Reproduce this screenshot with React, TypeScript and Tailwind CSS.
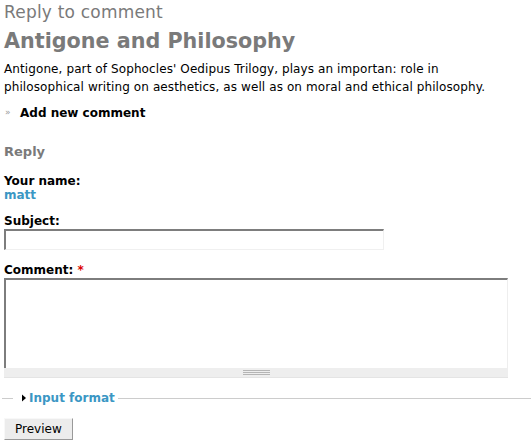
import React from "react";

export default function App() {
  return (
    <div
      className="w-[531px] h-[443px] bg-white overflow-hidden text-[12px] text-black"
      style={{ fontFamily: '"DejaVu Sans", Verdana, sans-serif' }}
    >
      <div className="px-[4px]">
        <div className="text-[17px] tracking-[0.2px] leading-[20px] text-[#7a7a7a] pt-[2px]">Reply to comment</div>
        <h2 className="text-[20.7px] leading-[26px] font-bold text-[#7a7a7a] mt-[6px]">Antigone and Philosophy</h2>
        <p className="w-[505px] text-[12px] tracking-[0.1px] leading-[18px] mt-[6px]">
          Antigone, part of Sophocles' Oedipus Trilogy, plays an importan: role in philosophical writing on aesthetics, as well as on moral and ethical philosophy.
        </p>
        <div className="flex items-center mt-[9px] h-[16px]">
          <span className="text-[9px] text-[#999] w-[16px] pl-[1px]">»</span>
          <span className="font-bold text-[12px]">Add new comment</span>
        </div>
        <div className="text-[13px] font-bold text-[#7a7a7a] mt-[23px] leading-[16px]">Reply</div>
        <div className="mt-[14px]">
          <div className="font-bold leading-[14px]">Your name:</div>
          <div className="font-bold text-[#3b97c4] leading-[15px]">matt</div>
        </div>
        <div className="mt-[11px]">
          <div className="font-bold leading-[15px]">Subject:</div>
          <div className="w-[380px] h-[21px] border-t-[2px] border-l-[2px] border-r border-b border-t-[#7d7d7d] border-l-[#7d7d7d] border-r-[#f0f0f0] border-b-[#f0f0f0] bg-white" />
        </div>
        <div className="mt-[13px]">
          <div className="font-bold leading-[15px]">
            Comment: <span className="text-[#d00]">*</span>
          </div>
          <div className="w-[504px]">
            <div className="h-[90px] border-t-[2px] border-l-[2px] border-r border-t-[#7d7d7d] border-l-[#7d7d7d] border-r-[#eee] bg-white" />
            <div className="h-[10px] bg-[#eeeeee] border-b border-[#e4e4e4] flex items-center justify-center">
              <div className="w-[27px] flex flex-col gap-[1px]">
                <div className="h-[1px] bg-[#b5b5b5]" />
                <div className="h-[1px] bg-[#b5b5b5]" />
                <div className="h-[1px] bg-[#b5b5b5]" />
              </div>
            </div>
          </div>
        </div>
      </div>
      <div className="flex items-center mt-[13px] pl-[2px]">
        <div className="w-[11px] h-[1px] bg-[#ccc]" />
        <div className="flex items-center pl-[9px] pr-[3px]">
          <svg width="5" height="8" viewBox="0 0 5 8" className="mr-[2px]">
            <polygon points="0,0.5 4,4 0,7.5" fill="#000" />
          </svg>
          <span className="font-bold text-[#3b97c4] text-[12px] leading-[14px]">Input format</span>
        </div>
        <div className="flex-1 h-[1px] bg-[#ccc]" />
      </div>
      <div className="pl-[4px] mt-[13px]">
        <button
          className="h-[22px] px-[10px] text-[12px] bg-[#ececec] border border-t-[#f8f8f8] border-l-[#f8f8f8] border-r-[#999] border-b-[#999] leading-[18px]"
          style={{ fontFamily: '"DejaVu Sans", Verdana, sans-serif' }}
        >
          Preview
        </button>
      </div>
    </div>
  );
}
